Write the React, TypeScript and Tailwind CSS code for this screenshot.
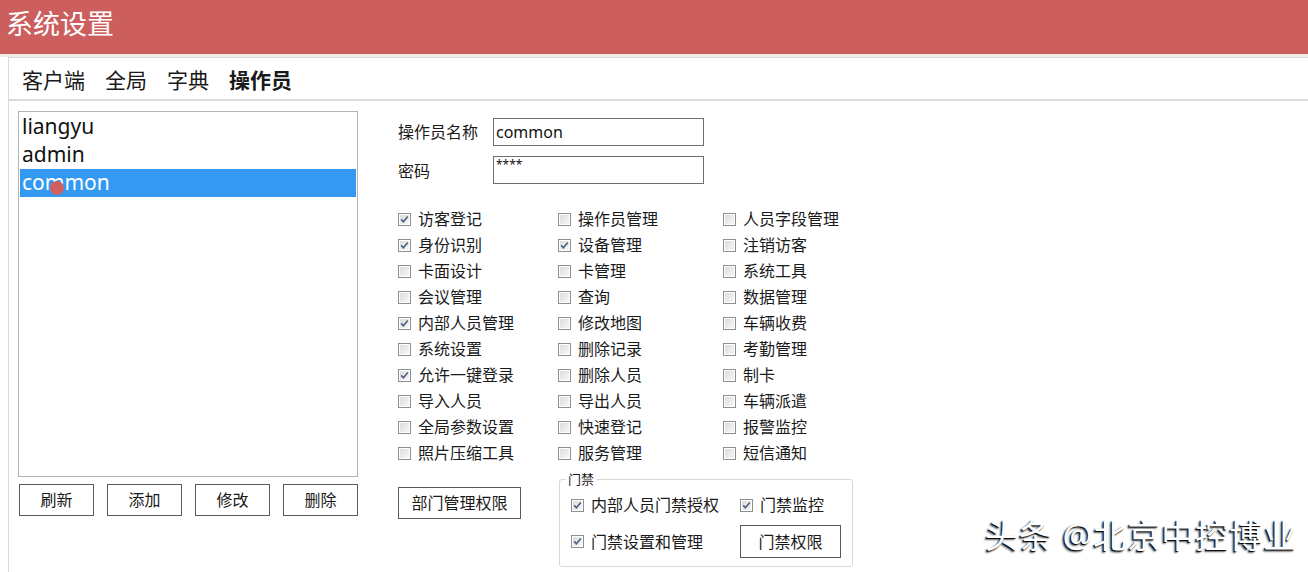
import React from "react";

const FONT = { fontFamily: '"Noto Sans", "Noto Sans CJK SC", sans-serif' };

// [label, checked] per column, rows read top to bottom
const colA: [string, boolean][] = [
  ["访客登记", true],
  ["身份识别", true],
  ["卡面设计", false],
  ["会议管理", false],
  ["内部人员管理", true],
  ["系统设置", false],
  ["允许一键登录", true],
  ["导入人员", false],
  ["全局参数设置", false],
  ["照片压缩工具", false],
];
const colB: [string, boolean][] = [
  ["操作员管理", false],
  ["设备管理", true],
  ["卡管理", false],
  ["查询", false],
  ["修改地图", false],
  ["删除记录", false],
  ["删除人员", false],
  ["导出人员", false],
  ["快速登记", false],
  ["服务管理", false],
];
const colC: [string, boolean][] = [
  ["人员字段管理", false],
  ["注销访客", false],
  ["系统工具", false],
  ["数据管理", false],
  ["车辆收费", false],
  ["考勤管理", false],
  ["制卡", false],
  ["车辆派遣", false],
  ["报警监控", false],
  ["短信通知", false],
];

function Box({ checked }: { checked: boolean }) {
  return (
    <svg width="13" height="13" viewBox="0 0 13 13" className="shrink-0">
      <defs>
        <linearGradient id="cbg" x1="0" y1="0" x2="1" y2="1">
          <stop offset="0" stopColor="#dcdcdc" />
          <stop offset="1" stopColor="#f7f7f7" />
        </linearGradient>
      </defs>
      <rect x="0.5" y="0.5" width="12" height="12" fill="#fff" stroke="#8e8f8f" />
      <rect x="2" y="2" width="9" height="9" fill="url(#cbg)" />
      {checked && (
        <path d="M3.2 6.4 L5.4 8.8 L9.8 3.6" fill="none" stroke="#4a5f86" strokeWidth="1.6" />
      )}
    </svg>
  );
}

function Check({ label, checked }: { label: string; checked: boolean }) {
  return (
    <div className="flex items-center gap-[7px] h-[26px] text-[16px] text-[#1a1a1a]">
      <Box checked={checked} />
      <span>{label}</span>
    </div>
  );
}

function Btn({ children, className = "" }: { children: React.ReactNode; className?: string }) {
  return (
    <div
      className={`flex items-center justify-center border border-[#5a5a5a] bg-white text-[16px] text-[#1a1a1a] ${className}`}
    >
      {children}
    </div>
  );
}

export default function App() {
  return (
    <div className="relative w-[1308px] h-[572px] overflow-hidden bg-white" style={FONT}>
      {/* Title bar */}
      <div className="h-[54px] bg-[#cc5e5e] flex items-center pl-[6px]">
        <span className="text-[27px] text-white leading-none -mt-[8px]">系统设置</span>
      </div>
      <div className="h-[3px] bg-[#f3ebe8]" />

      <div className="ml-[8px] border-l border-t border-[#dcd8e2] h-[515px]">
        {/* Tabs */}
        <div className="h-[43px] border-b-2 border-[#dadada] flex items-center gap-[20px] pl-[13px] pt-[4px] text-[21px] text-[#1a1a1a]">
          <span>客户端</span>
          <span>全局</span>
          <span>字典</span>
          <span className="font-bold">操作员</span>
        </div>

        <div className="flex pt-[10px]">
          {/* Operator list */}
          <div className="ml-[9px] w-[340px] flex flex-col">
            <div className="h-[366px] border border-[#b4b4b4] pt-px px-px">
              {["liangyu", "admin", "common"].map((n) => (
                <div
                  key={n}
                  className={`relative h-[28px] flex items-center pl-[2px] text-[21px] ${
                    n === "common" ? "bg-[#3399f3] text-white" : "text-[#111]"
                  }`}
                >
                  {n}
                  {n === "common" && (
                    <span className="absolute left-[30px] top-[12px] w-[14px] h-[14px] rounded-full bg-[#d0605e]" />
                  )}
                </div>
              ))}
            </div>
            <div className="flex justify-between mt-[7px] pl-px">
              <Btn className="w-[75px] h-[32px]">刷新</Btn>
              <Btn className="w-[75px] h-[32px]">添加</Btn>
              <Btn className="w-[75px] h-[32px]">修改</Btn>
              <Btn className="w-[75px] h-[32px]">删除</Btn>
            </div>
          </div>

          {/* Operator form */}
          <div className="ml-[40px] pt-[7px] flex flex-col">
            <div className="flex items-center h-[28px]">
              <span className="w-[95px] text-[16px] text-[#1a1a1a]">操作员名称</span>
              <div className="w-[211px] h-[28px] border border-[#6e6e6e] pl-[2px] flex items-center text-[16px] text-[#111]">
                common
              </div>
            </div>
            <div className="flex items-center h-[28px] mt-[10px]">
              <span className="w-[95px] text-[16px] text-[#1a1a1a] pt-[2px]">密码</span>
              <div className="w-[211px] h-[28px] border border-[#6e6e6e] pl-[2px] text-[12px] leading-[16px] text-[#111]">
                ****
              </div>
            </div>

            <div className="flex mt-[22px]">
              <div className="w-[160px]">
                {colA.map(([l, c]) => (
                  <Check key={l} label={l} checked={c} />
                ))}
              </div>
              <div className="w-[165px]">
                {colB.map(([l, c]) => (
                  <Check key={l} label={l} checked={c} />
                ))}
              </div>
              <div>
                {colC.map(([l, c]) => (
                  <Check key={l} label={l} checked={c} />
                ))}
              </div>
            </div>

            <div className="flex items-start mt-[6px]">
              <Btn className="w-[123px] h-[32px] mt-[15px]">部门管理权限</Btn>
              <fieldset className="ml-[38px] w-[288px] h-[95px] border border-[#d8d8d8] rounded-[3px] px-[11px] pb-0">
                <legend className="text-[13px] text-[#1a1a1a] px-[2px] -ml-[5px] leading-[14px]">门禁</legend>
                <div className="flex items-center h-[26px] mt-[6px]">
                  <div className="w-[169px]">
                    <Check label="内部人员门禁授权" checked />
                  </div>
                  <Check label="门禁监控" checked />
                </div>
                <div className="flex items-center h-[33px] mt-[7px]">
                  <div className="w-[169px]">
                    <Check label="门禁设置和管理" checked />
                  </div>
                  <Btn className="w-[101px] h-[33px]">门禁权限</Btn>
                </div>
              </fieldset>
            </div>
          </div>
        </div>
      </div>

      {/* Watermark */}
      <div
        className="absolute left-[985px] top-[519px] text-[33px] tracking-[1px] text-white leading-none whitespace-nowrap"
        style={{ textShadow: "-1px 1px 1px #000, -2px 2px 2px rgba(0,0,0,0.6)" }}
      >
        头条 @北京中控博业
      </div>
    </div>
  );
}
